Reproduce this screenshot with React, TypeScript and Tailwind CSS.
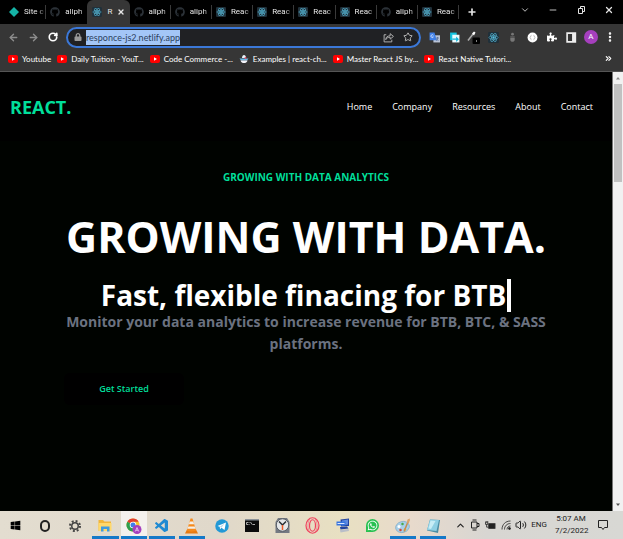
import type { ReactNode } from "react";
import { ArrowLeft, ArrowRight, RotateCw, Plus, X, ChevronDown, ChevronUp, Minus, Star, MoreVertical, ChevronsRight, Volume2 } from "lucide-react";
import { FaGithub, FaLock, FaPuzzlePiece, FaWhatsapp, FaWindows } from "react-icons/fa";
import { VscVscode } from "react-icons/vsc";

function Atom({ className = "size-[9px]" }: { className?: string }) {
  return (
    <svg viewBox="0 0 24 24" className={className} fill="none" stroke="#4fa9c6" strokeWidth="1.6">
      <rect width="24" height="24" rx="3" fill="#20303a" stroke="none" />
      <ellipse cx="12" cy="12" rx="10" ry="4" />
      <ellipse cx="12" cy="12" rx="10" ry="4" transform="rotate(60 12 12)" />
      <ellipse cx="12" cy="12" rx="10" ry="4" transform="rotate(120 12 12)" />
      <circle cx="12" cy="12" r="2" fill="#61c9e8" />
    </svg>
  );
}

function YoutubeIcon() {
  return (
    <svg viewBox="0 0 20 16" className="h-2 w-[10px] shrink-0">
      <rect width="20" height="16" rx="4" fill="#f00" />
      <path d="M8 4.5v7l6-3.500z" fill="#fff" />
    </svg>
  );
}

function ChartIcon() {
  return (
    <svg viewBox="0 0 20 20" className="size-[10px] shrink-0">
      <path d="M6 8c0-4 2-6 4-6s4 2 4 6z" fill="#e9f3fb" />
      <path d="M1 9h18l-3 4H4z" fill="#6cb7e6" />
      <path d="M3 13h14c-1 4-4 5-7 5s-6-1-7-5z" fill="#f4f4fa" />
      <circle cx="13" cy="8" r="2" fill="#e0526b" />
    </svg>
  );
}

type Tab = { kind: "site" | "github" | "react"; title: string; active?: boolean };

const tabs: Tab[] = [
  { kind: "site", title: "Site c" },
  { kind: "github", title: "aliph" },
  { kind: "react", title: "R", active: true },
  { kind: "github", title: "aliph" },
  { kind: "github", title: "aliph" },
  { kind: "react", title: "Reac" },
  { kind: "react", title: "Reac" },
  { kind: "react", title: "Reac" },
  { kind: "react", title: "Reac" },
  { kind: "github", title: "aliph" },
  { kind: "react", title: "Reac" },
];

function TabIcon({ kind }: { kind: Tab["kind"] }) {
  if (kind === "github") return <FaGithub className="size-[10px] shrink-0 text-[#2b3137]" />;
  if (kind === "react") return <Atom className="size-[10px] shrink-0" />;
  return (
    <svg viewBox="0 0 10 10" className="size-[10px] shrink-0">
      <path d="M5 0l5 5-5 5-5-5z" fill="#15b3a6" />
    </svg>
  );
}

function TabStrip() {
  return (
    <div className="flex h-6 items-stretch bg-black pl-[5px] text-[#e4e4e4]">
      <div className="flex min-w-0 flex-1" role="tablist">
        {tabs.map((tab, i) => (
          <button
            key={i}
            role="tab"
            aria-selected={!!tab.active}
            className={
              tab.active
                ? "flex min-w-0 flex-1 basis-0 items-center gap-[5px] rounded-t-md bg-[#363636] pl-[5px]"
                : "flex min-w-0 flex-1 basis-0 items-center gap-[5px] pl-1"
            }
          >
            <TabIcon kind={tab.kind} />
            {tab.active ? (
              <>
                <span>{tab.title}</span>
                <X className="size-2 shrink-0" strokeWidth={4} />
              </>
            ) : (
              <>
                <span className="min-w-0 flex-1 text-left whitespace-nowrap [mask-image:linear-gradient(to_right,#000_65%,#0004)]">{tab.title}</span>
                {!tabs[i + 1]?.active && <span className="-ml-1 h-[14px] w-px bg-[#3a3a3a]" />}
              </>
            )}
          </button>
        ))}
      </div>
      <div className="flex w-[164px] shrink-0 items-center justify-between pr-[9px] pl-2">
        <button aria-label="New tab"><Plus className="size-[10px]" strokeWidth={4} /></button>
        <div className="flex items-center gap-[18px] pb-1">
          <button aria-label="Search tabs"><ChevronDown className="size-[10px]" strokeWidth={2} /></button>
          <button aria-label="Minimize"><Minus className="size-[10px]" strokeWidth={2} /></button>
          <button aria-label="Restore">
            <svg viewBox="0 0 10 10" className="size-[10px]" fill="none" stroke="currentColor">
              <path d="M2.500 3.500h4v5h-4zM4.500 3V1.500h4v5H7" />
            </svg>
          </button>
          <button aria-label="Close"><X className="size-[10px]" strokeWidth={3} /></button>
        </div>
      </div>
    </div>
  );
}

const extensions: { name: string; icon: ReactNode }[] = [
  {
    name: "Translate",
    icon: (
      <svg viewBox="0 0 20 20" className="size-[11px]">
        <rect x="8" y="6" width="12" height="13" fill="#b9c3d6" />
        <path d="M1 1h9l4 14H1z" fill="#3f7fe8" />
        <path d="M8 6a2.500 2.500 0 1 0 0 3H6" fill="none" stroke="#fff" strokeWidth="1.200" />
        <path d="M13 11h5M15.500 9v2c0 2-1 4-2 5M13 12l4 4" fill="none" stroke="#546e9b" strokeWidth="1.500" />
      </svg>
    ),
  },
  {
    name: "Copy pages",
    icon: (
      <svg viewBox="0 0 20 20" className="size-[11px]">
        <path d="M2 1h12v14H2z" fill="#14c4e0" />
        <path d="M6 5h13v14H6z" fill="#e9fbff" />
        <path d="M6 12h7V8l5 5-5 5v-4H6z" fill="#10b6da" />
      </svg>
    ),
  },
  {
    name: "Color picker",
    icon: (
      <svg viewBox="0 0 26 26" className="size-[13px]">
        <path d="M2 19L12 6" stroke="#aaa" strokeWidth="3" />
        <path d="M10 5l4 4 3-6-3-2z" fill="#fff" />
        <rect x="11" y="13" width="15" height="13" rx="2" fill="#000" />
        <rect x="18" y="19" width="2" height="2" fill="#fff" />
      </svg>
    ),
  },
  { name: "React tools", icon: <Atom className="size-[11px]" /> },
  {
    name: "Bug tracker",
    icon: (
      <svg viewBox="0 0 20 20" className="size-[11px]" fill="#777">
        <circle cx="10" cy="4" r="2.500" />
        <path d="M6 8h8v2H6zM6 11h8v3c0 5-8 5-8 0z" />
      </svg>
    ),
  },
  {
    name: "JSON viewer",
    icon: (
      <svg viewBox="0 0 20 20" className="size-[11px]">
        <circle cx="10" cy="10" r="9" fill="#fff" />
        <path d="M8 6c-2 0 0 3-3 4 3 1 1 4 3 4M12 6c2 0 0 3 3 4-3 1-1 4-3 4" fill="none" stroke="#999" strokeWidth="1.200" />
      </svg>
    ),
  },
  { name: "Extensions", icon: <FaPuzzlePiece className="size-[10px] text-white" /> },
  {
    name: "Side panel",
    icon: (
      <svg viewBox="0 0 20 20" className="size-[11px]">
        <path d="M2 2h15v16H2z" fill="none" stroke="#eee" strokeWidth="3" />
        <path d="M11 2h6v16h-6z" fill="#eee" />
      </svg>
    ),
  },
  {
    name: "Profile",
    icon: <span className="grid size-[14px] place-items-center rounded-full bg-[#a53fbd] text-[8px] leading-none text-white">A</span>,
  },
  { name: "Menu", icon: <MoreVertical className="size-3 text-white" strokeWidth={3} /> },
];

function Toolbar() {
  return (
    <div className="flex h-[26px] items-center bg-[#363636]">
      <div className="flex w-[66px] shrink-0 items-center gap-[9px] pl-2 text-[#8d8d8d]">
        <button aria-label="Back"><ArrowLeft className="size-[11px]" strokeWidth={3} /></button>
        <button aria-label="Forward"><ArrowRight className="size-[11px]" strokeWidth={3} /></button>
        <button aria-label="Reload"><RotateCw className="size-[10px] text-white" strokeWidth={4} /></button>
      </div>
      <div className="flex h-[21px] min-w-0 flex-1 items-center rounded-full border-2 border-[#3b78d8] bg-[#202124] px-[6px]">
        <FaLock className="size-2 shrink-0 text-[#9a9a9a]" />
        <div className="ml-1 min-w-0 flex-1">
          <input
            aria-label="Address"
            defaultValue="responce-js2.netlify.app"
            className="block h-[15px] max-w-full bg-[#a3c6f7] font-['Lato','Open_Sans',sans-serif] text-[9px] text-[#2c3f5c] outline-none [field-sizing:content]"
          />
        </div>
        <button aria-label="Share" className="mr-[9px] text-[#bdbdbd]">
          <svg viewBox="0 0 20 20" className="size-[11px]" fill="none" stroke="currentColor" strokeWidth="1.600">
            <path d="M6 5H2v13h14v-4M5 14c0-5 3-7 8-7V3l6 5-6 5V9.500c-4 0-6 1-8 4.500z" />
          </svg>
        </button>
        <button aria-label="Bookmark" className="text-[#d0d0d0]"><Star className="size-[10px]" strokeWidth={2} /></button>
      </div>
      <div className="flex w-[202px] shrink-0 pr-[3px] pl-1">
        {extensions.map((ext) => (
          <button key={ext.name} aria-label={ext.name} className="grid flex-1 place-items-center">
            {ext.icon}
          </button>
        ))}
      </div>
    </div>
  );
}

const bookmarks = [
  { label: "Youtube", yt: true },
  { label: "Daily Tuition - YouT...", yt: true },
  { label: "Code Commerce -...", yt: true },
  { label: "Examples | react-ch...", yt: false },
  { label: "Master React JS by...", yt: true },
  { label: "React Native Tutori...", yt: true },
];

function Bookmarks() {
  return (
    <nav className="flex h-[22px] items-center gap-[6px] border-b border-[#555] bg-[#363636] pr-[10px] pb-1 pl-2 font-['Lato','Open_Sans',sans-serif] text-white">
      {bookmarks.map((b) => (
        <a key={b.label} href="#" className="flex shrink-0 items-center gap-1 whitespace-nowrap">
          {b.yt ? <YoutubeIcon /> : <ChartIcon />}
          {b.label}
        </a>
      ))}
      <button aria-label="More bookmarks" className="ml-auto"><ChevronsRight className="size-[9px]" strokeWidth={3} /></button>
    </nav>
  );
}

function Page() {
  return (
    <div className="min-w-0 flex-1 bg-[#000300] font-['Open_Sans','Noto_Sans',sans-serif]">
      <header className="flex h-[69px] items-center justify-between bg-black pr-[19px] pl-[10px]">
        <h1 className="text-[18px] leading-6 font-bold text-[#00df9a]">REACT.</h1>
        <nav className="flex gap-5 text-[9px] leading-4 text-white">
          {["Home", "Company", "Resources", "About", "Contact"].map((item) => (
            <a key={item} href="#">{item}</a>
          ))}
        </nav>
      </header>
      <main className="px-16 pt-7 text-center">
        <p className="text-[10px] leading-4 font-bold text-[#00df9a]">GROWING WITH DATA ANALYTICS</p>
        <h2 className="mt-5 text-[43px] leading-[64px] font-bold whitespace-nowrap text-white">GROWING WITH DATA.</h2>
        <div className="mt-[10px] flex h-8 items-center justify-center gap-px text-[28px] font-bold whitespace-nowrap text-white">
          <p>Fast, flexible finacing for BTB</p>
          <span className="h-[33px] w-1 bg-white" />
        </div>
        <p className="text-[14px] leading-[22px] font-bold text-[#6b7280]">
          Monitor your data analytics to increase revenue for BTB, BTC, &amp; SASS platforms.
        </p>
        <button className="mt-[18px] block h-8 w-[120px] rounded-md bg-black text-[9px] font-semibold text-[#00df9a]">Get Started</button>
      </main>
    </div>
  );
}

function Scrollbar() {
  return (
    <div className="flex w-[11px] shrink-0 flex-col items-center border-l border-[#777] bg-[#f1f1f1]">
      <svg viewBox="0 0 10 12" className="h-3 w-[10px]"><path d="M3 7.500h4L5 5z" fill="#8a8a8a" /></svg>
      <div className="h-[98px] w-2 bg-[#c1c1c1]" />
      <svg viewBox="0 0 10 12" className="mt-auto h-3 w-[10px]"><path d="M3 4.500h4L5 7z" fill="#505050" /></svg>
    </div>
  );
}

const apps: { name: string; state?: "open" | "focused"; icon: ReactNode }[] = [
  { name: "Start", icon: <FaWindows className="size-[11px] text-black" /> },
  { name: "Search", icon: <span className="h-3 w-[10px] rounded-full border-2 border-[#222]" /> },
  {
    name: "Settings",
    icon: (
      <svg viewBox="0 0 24 24" className="size-3" fill="none" stroke="#444">
        <circle cx="12" cy="12" r="6.500" strokeWidth="3" />
        <circle cx="12" cy="12" r="10" strokeWidth="4" strokeDasharray="3.900 3.954" />
      </svg>
    ),
  },
  {
    name: "Files",
    state: "open",
    icon: (
      <svg viewBox="0 0 28 26" className="h-[13px] w-[14px]">
        <path d="M1 2h9l3 3h13v19H1z" fill="#f2b63a" />
        <path d="M1 8h26v16H1z" fill="#ffd86b" />
        <path d="M6 15h17v10h-5v-5h-7v5H6z" fill="#3e9be0" />
      </svg>
    ),
  },
  {
    name: "Chrome",
    state: "focused",
    icon: (
      <svg viewBox="0 0 32 36" className="h-[18px] w-4">
        <circle cx="14" cy="16" r="13" fill="#f5c32c" />
        <path d="M14 16L2.700 9.500A13 13 0 0 1 25.300 9.500H14z" fill="#e1402f" />
        <path d="M14 16L2.700 9.500A13 13 0 0 0 14 29l5-9z" fill="#2f9e4f" />
        <circle cx="14" cy="16" r="6.500" fill="#fff" />
        <circle cx="14" cy="16" r="5" fill="#3f7ee8" />
        <circle cx="22" cy="25" r="9" fill="#a53fbd" />
        <path d="M18.500 29l3.500-8 3.500 8M20 26.500h4" fill="none" stroke="#f0dcf5" strokeWidth="1.500" />
      </svg>
    ),
  },
  { name: "Code editor", state: "open", icon: <VscVscode className="size-4 text-[#1f8ad2]" /> },
  {
    name: "Media player",
    state: "open",
    icon: (
      <svg viewBox="0 0 26 32" className="h-4 w-[13px]">
        <path d="M4 23h18l4 8H0z" fill="#e87a12" />
        <path d="M11 1h4l7 24c-4 3-14 3-18 0z" fill="#f58a1c" />
        <path d="M9.500 7h7l1.700 5.500H7.800zM6.600 17h12.800l1.500 4.500H5.100z" fill="#f4efe8" />
      </svg>
    ),
  },
  {
    name: "Telegram",
    icon: (
      <svg viewBox="0 0 28 28" className="size-[14px]">
        <circle cx="14" cy="14" r="13.500" fill="#2399d6" />
        <path d="M5 14l17-7-3 15-6-4.500-3 3-.5-5z" fill="#fff" />
        <path d="M9.500 15.500L19 9l-6 8.500" fill="#b7d9ee" />
      </svg>
    ),
  },
  {
    name: "Terminal",
    icon: (
      <svg viewBox="0 0 28 26" className="h-[13px] w-[14px]">
        <rect width="28" height="26" fill="#0b0b0b" />
        <path d="M0 0h28v3H0z" fill="#8b9298" />
        <path d="M3 7h4M3 7v4h4M9 7v1M9 10v1M11 6l3 5M15 11h5" fill="none" stroke="#ddd" strokeWidth="1.500" />
      </svg>
    ),
  },
  {
    name: "Clock",
    icon: (
      <svg viewBox="0 0 30 34" className="h-[17px] w-[15px]">
        <path d="M6 2h18l5 8v22H1V10z" fill="#737982" />
        <circle cx="15" cy="16" r="12.500" fill="#e4e6e8" stroke="#555b63" strokeWidth="2" />
        <path d="M8 9l7 7 7-7" fill="none" stroke="#292d33" strokeWidth="3" />
        <path d="M15 16v10" stroke="#ee5a28" strokeWidth="3" />
      </svg>
    ),
  },
  {
    name: "Opera",
    icon: (
      <svg viewBox="0 0 30 34" className="h-[17px] w-[15px]" fill="none" stroke="#f0435e" strokeWidth="2.400">
        <ellipse cx="15" cy="17" rx="13" ry="15.500" />
        <ellipse cx="15" cy="17" rx="6" ry="11.500" />
        <path d="M10 4c-5 4-6 21 0 26M20 4c5 4 6 21 0 26" strokeWidth="1" />
      </svg>
    ),
  },
  {
    name: "Remote desktop",
    icon: (
      <svg viewBox="0 0 28 32" className="h-4 w-[14px]">
        <path d="M9 3l17-2v15l-16 1z" fill="#23449f" />
        <path d="M12 5l12-2v10l-12 2z" fill="#5e8ae0" />
        <path d="M1 7h18v8H1z" fill="#3674de" />
        <path d="M3 11h14" stroke="#dbe7ff" strokeWidth="2" />
        <path d="M8 18l14-1 3 4-16 2z" fill="#23449f" />
        <path d="M8 24l17-2 1 4-17 3z" fill="#b9bec8" />
      </svg>
    ),
  },
  {
    name: "WhatsApp",
    icon: (
      <span className="grid size-[13px] place-items-center rounded-full rounded-bl-xs bg-[#28c151]">
        <FaWhatsapp className="size-[11px] text-white" />
      </span>
    ),
  },
  {
    name: "Paint",
    state: "open",
    icon: (
      <svg viewBox="0 0 32 32" className="size-4">
        <ellipse cx="15" cy="18" rx="14" ry="11" fill="#a8cfe8" stroke="#6b9cbd" transform="rotate(-15 15 18)" />
        <circle cx="8" cy="17" r="3" fill="#fff" />
        <circle cx="11" cy="24" r="2.500" fill="#d64534" />
        <circle cx="15" cy="12" r="2.500" fill="#4aa84a" />
        <circle cx="20" cy="23" r="2.500" fill="#f0b62c" />
        <path d="M28 3L18 27" stroke="#c68b4e" strokeWidth="3" />
        <path d="M30 1l-5 2-1 8 4-1z" fill="#dba46b" />
      </svg>
    ),
  },
  {
    name: "Notepad",
    state: "open",
    icon: (
      <svg viewBox="0 0 30 32" className="h-4 w-[15px]">
        <path d="M8 3l20 1-4 26-22-5z" fill="#4c8ea4" />
        <path d="M8 3l18 1-5 22-19-2z" fill="#8fd0e4" />
        <path d="M9 5l10 1-9 16-5-1z" fill="#c7edf6" />
      </svg>
    ),
  },
];

function Taskbar() {
  return (
    <footer className="flex h-7 shrink-0 items-stretch bg-[linear-gradient(to_right,#e3ddd0,#e0d8ca_35%,#e8e0c2_55%,#e8dacc_66%,#d8d6d2_78%,#d8d8d4)] text-[#222]">
      <div className="flex w-[448px] shrink-0">
        {apps.map((app) => (
          <button
            key={app.name}
            aria-label={app.name}
            className={app.state === "focused" ? "flex flex-1 basis-0 flex-col items-center bg-[#f4f1ed]" : "flex flex-1 basis-0 flex-col items-center px-[2px]"}
          >
            <span className="grid h-[25px] w-full place-items-center pt-1">{app.icon}</span>
            {app.state && <span className="h-[3px] w-full bg-[#1579c8]" />}
          </button>
        ))}
      </div>
      <div className="ml-auto flex items-center">
        <div className="flex items-center gap-1">
          <ChevronUp className="size-[11px]" strokeWidth={2.5} />
          <svg viewBox="0 0 20 24" className="h-3 w-[10px]" fill="none" stroke="currentColor" strokeWidth="2">
            <path d="M5 2h8M5 22h8M3 6h11v12H3zM14 9h4v6h-4" />
          </svg>
          <svg viewBox="0 0 20 20" className="ml-px size-[11px]">
            <path d="M7 7h11v8H7z" fill="#222" stroke="#222" strokeWidth="2" />
            <path d="M1 4h4v4H1zM3 8v5h3M2 2v2M5 2v2" fill="none" stroke="#222" strokeWidth="1.500" />
          </svg>
          <svg viewBox="0 0 20 20" className="ml-px size-[10px]" fill="none" stroke="currentColor" strokeWidth="1.600">
            <path d="M2 19C2 9 9 2 19 2M7 19c0-7 5-12 12-12M12 19c0-4 3-7 7-7" />
            <circle cx="17" cy="17" r="2" fill="currentColor" />
          </svg>
          <Volume2 className="size-3" strokeWidth={2} />
        </div>
        <span className="ml-1">ENG</span>
        <div className="ml-2 w-8 text-center leading-3 whitespace-nowrap">
          <div>5:07 AM</div>
          <div>7/2/2022</div>
        </div>
        <button aria-label="Notifications" className="mr-[14px] ml-[10px]">
          <svg viewBox="0 0 12 12" className="size-3" fill="none" stroke="currentColor">
            <path d="M1.500 1.500h9v7h-3l-1.500 2-1.500-2h-3z" />
          </svg>
        </button>
      </div>
    </footer>
  );
}

export default function App() {
  return (
    <div className="flex min-h-screen flex-col overflow-hidden bg-black font-['Roboto','Open_Sans',sans-serif] text-[8px]">
      <TabStrip />
      <Toolbar />
      <Bookmarks />
      <div className="flex flex-1">
        <Page />
        <Scrollbar />
      </div>
      <Taskbar />
    </div>
  );
}
